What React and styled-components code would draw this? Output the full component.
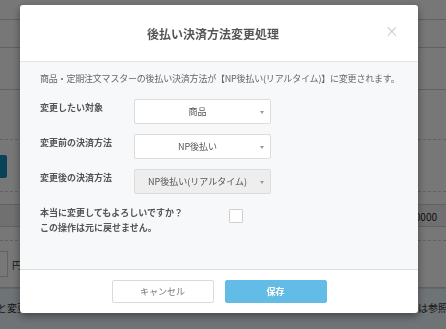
import React from "react";
import styled, { createGlobalStyle } from "styled-components";

const GlobalStyle = createGlobalStyle`
  html, body {
    margin: 0;
    padding: 0;
    width: 446px;
    height: 329px;
    overflow: hidden;
    font-family: "Noto Sans CJK JP", "Noto Sans", sans-serif;
  }
`;

function App() {
  return (
    <>
      <GlobalStyle />
      <Page>
        <PageRow h={20} />
        <PageRow h={28} />
        <PageRow h={42} />
        <PageRow h={50} dashed />
        <PageRow h={52} dashed>
          <BlueButton />
        </PageRow>
        <PageRow h={13} />
        <PageRow h={22} shade>
          <RightValue>0000</RightValue>
        </PageRow>
        <PageRow h={14} dashed />
        <PageRow h={47}>
          <SmallInput />
          <Yen>円</Yen>
        </PageRow>
        <InfoBand>
          <span>と変更</span>
          <RightNote>は参照</RightNote>
        </InfoBand>
      </Page>

      <Overlay>
        <Modal>
          <Header>
            <Title>後払い決済方法変更処理</Title>
            <Close>×</Close>
          </Header>
          <Body>
            <Intro>
              商品・定期注文マスターの後払い決済方法が【NP後払い(リアルタイム)】に変更されます。
            </Intro>
            <FieldRow>
              <Label>変更したい対象</Label>
              <Select>
                <span>商品</span>
                <Arrow />
              </Select>
            </FieldRow>
            <FieldRow>
              <Label>変更前の決済方法</Label>
              <Select>
                <span>NP後払い</span>
                <Arrow />
              </Select>
            </FieldRow>
            <FieldRow>
              <Label>変更後の決済方法</Label>
              <Select disabled>
                <span>NP後払い(リアルタイム)</span>
                <Arrow />
              </Select>
            </FieldRow>
            <ConfirmRow>
              <ConfirmText>
                本当に変更してもよろしいですか？
                <br />
                この操作は元に戻せません。
              </ConfirmText>
              <Checkbox />
            </ConfirmRow>
          </Body>
          <Footer>
            <CancelButton>キャンセル</CancelButton>
            <SaveButton>保存</SaveButton>
          </Footer>
        </Modal>
      </Overlay>
    </>
  );
}

export default App;

const Page = styled.div`
  width: 446px;
  height: 329px;
  background: #fdfdfd;
  display: flex;
  flex-direction: column;
  overflow: hidden;
`;

const PageRow = styled.div`
  height: ${(p) => p.h}px;
  flex-shrink: 0;
  box-sizing: border-box;
  border-bottom: 1px ${(p) => (p.dashed ? "dashed" : "solid")} #cfcfcf;
  background: ${(p) => (p.shade ? "#efefef" : "transparent")};
  display: flex;
  align-items: center;
  font-size: 10px;
  color: #333;
`;

const BlueButton = styled.div`
  width: 7px;
  height: 23px;
  margin-top: 2px;
  background: #178fbe;
  border-radius: 0 2px 2px 0;
`;

const RightValue = styled.span`
  margin-left: auto;
  margin-right: 9px;
  margin-top: 2px;
  font-size: 10px;
  color: #222;
`;

const SmallInput = styled.div`
  width: 8px;
  height: 26px;
  box-sizing: border-box;
  border: 1px solid #d0d0d0;
  border-left: none;
  background: #fff;
`;

const Yen = styled.span`
  margin-left: 4px;
  font-size: 10px;
  color: #333;
`;

const InfoBand = styled.div`
  flex: 1;
  background: #eaf4fa;
  border-top: 1px solid #cfe0ea;
  display: flex;
  justify-content: space-between;
  align-items: flex-start;
  padding-top: 11px;
  font-size: 10px;
  color: #333;
  white-space: nowrap;
  margin-left: -3px;
`;

const RightNote = styled.span`
  margin-right: -2px;
`;

const Overlay = styled.div`
  position: fixed;
  inset: 0;
  background: rgba(0, 0, 0, 0.53);
  display: flex;
  align-items: flex-start;
  padding: 5px 0 0 20px;
`;

const Modal = styled.div`
  width: 398px;
  height: 308px;
  background: #fff;
  border-radius: 3px;
  box-shadow: 0 3px 9px rgba(0, 0, 0, 0.4);
  display: flex;
  flex-direction: column;
  overflow: hidden;
`;

const Header = styled.div`
  height: 57px;
  flex-shrink: 0;
  box-sizing: border-box;
  border-bottom: 1px solid #e3e3e3;
  display: flex;
  align-items: center;
  justify-content: center;
  position: relative;
`;

const Title = styled.h3`
  margin: 0 0 0 -12px;
  font-size: 12px;
  font-weight: bold;
  color: #555;
`;

const Close = styled.span`
  position: absolute;
  right: 19px;
  top: 16px;
  font-size: 17px;
  font-weight: 300;
  color: #c4c4c4;
  font-family: "DejaVu Sans", sans-serif;
`;

const Body = styled.div`
  flex: 1;
  background: #f7f8fa;
  padding: 9px 20px 0 20px;
  display: flex;
  flex-direction: column;
`;

const Intro = styled.p`
  margin: 0 0 12px;
  font-size: 9px;
  line-height: 16px;
  color: #666;
  white-space: nowrap;
  letter-spacing: -0.2px;
`;

const FieldRow = styled.div`
  display: flex;
  align-items: flex-start;
  margin-bottom: 10px;
`;

const Label = styled.div`
  width: 94px;
  font-size: 9px;
  line-height: 18px;
  font-weight: bold;
  color: #555;
`;

const Select = styled.div`
  width: 137px;
  height: 25px;
  box-sizing: border-box;
  border: 1px solid #dcdcdc;
  border-radius: 2px;
  background: ${(p) => (p.disabled ? "#eeeeee" : "#fff")};
  display: flex;
  align-items: center;
  justify-content: center;
  padding-right: 10px;
  position: relative;
  font-size: 9px;
  color: #555;
`;

const Arrow = styled.i`
  position: absolute;
  right: 6px;
  top: 11px;
  width: 0;
  height: 0;
  border-left: 2px solid transparent;
  border-right: 2px solid transparent;
  border-top: 3px solid #999;
`;

const ConfirmRow = styled.div`
  display: flex;
  align-items: flex-start;
  margin-top: 1px;
`;

const ConfirmText = styled.div`
  width: 189px;
  font-size: 9px;
  line-height: 15px;
  font-weight: bold;
  color: #555;
`;

const Checkbox = styled.div`
  width: 14px;
  height: 14px;
  margin-top: 4px;
  box-sizing: border-box;
  border: 1px solid #cfcfcf;
  border-radius: 1px;
  background: #fff;
`;

const Footer = styled.div`
  height: 44px;
  flex-shrink: 0;
  box-sizing: border-box;
  border-top: 1px solid #dedede;
  display: flex;
  align-items: center;
  justify-content: center;
  gap: 11px;
  padding-bottom: 1px;
`;

const BaseButton = styled.button`
  width: 102px;
  height: 23px;
  box-sizing: border-box;
  border-radius: 2px;
  font-family: "Noto Sans CJK JP", sans-serif;
  font-size: 9px;
  cursor: pointer;
`;

const CancelButton = styled(BaseButton)`
  background: #fff;
  border: 1px solid #dadada;
  color: #777;
`;

const SaveButton = styled(BaseButton)`
  background: #62bce5;
  border: 1px solid #62bce5;
  color: #fff;
  font-weight: bold;
`;
